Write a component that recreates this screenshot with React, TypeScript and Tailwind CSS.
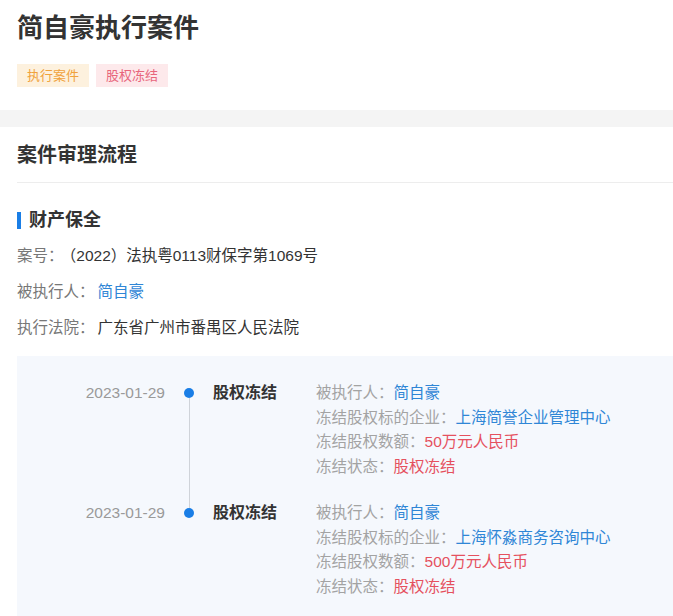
import React from "react";

type Detail = { label: string; value: string; tone: "blue" | "red" };

type Freeze = {
	date: string;
	title: string;
	details: Detail[];
};

const freezes: Freeze[] = [
	{
		date: "2023-01-29",
		title: "股权冻结",
		details: [
			{ label: "被执行人：", value: "简自豪", tone: "blue" },
			{ label: "冻结股权标的企业：", value: "上海简誉企业管理中心", tone: "blue" },
			{ label: "冻结股权数额：", value: "50万元人民币", tone: "red" },
			{ label: "冻结状态：", value: "股权冻结", tone: "red" },
		],
	},
	{
		date: "2023-01-29",
		title: "股权冻结",
		details: [
			{ label: "被执行人：", value: "简自豪", tone: "blue" },
			{ label: "冻结股权标的企业：", value: "上海怀淼商务咨询中心", tone: "blue" },
			{ label: "冻结股权数额：", value: "500万元人民币", tone: "red" },
			{ label: "冻结状态：", value: "股权冻结", tone: "red" },
		],
	},
];

const toneClass = {
	blue: "text-[#2f86d6]",
	red: "text-[#e5515f]",
};

const TimelineItem: React.FC<{ item: Freeze; first: boolean; last: boolean }> = ({
	item,
	first,
	last,
}) => (
	<div className="flex">
		<div className="w-[148px] shrink-0 text-right text-[15.5px] leading-[24.5px] text-[#9a9a9a]">
			{item.date}
		</div>
		{/* dot + connecting line */}
		<div className="w-[48px] shrink-0 flex flex-col items-center">
			<div className={`h-[7.25px] w-px ${first ? "" : "bg-[#cfd3d9]"}`} />
			<div className="h-[10px] w-[10px] rounded-full bg-[#1a7ee6]" />
			<div className={`flex-1 w-px ${last ? "" : "bg-[#cfd3d9]"}`} />
		</div>
		<div className="w-[103px] shrink-0 text-[16px] leading-[24.5px] font-semibold text-[#333]">
			{item.title}
		</div>
		<div className={`flex flex-col text-[15.5px] leading-[24.5px] ${last ? "" : "pb-[22px]"}`}>
			{item.details.map((d, i) => (
				<div key={i} className="whitespace-nowrap">
					<span className="text-[#a3a3a3]">{d.label}</span>
					<span className={toneClass[d.tone]}>{d.value}</span>
				</div>
			))}
		</div>
	</div>
);

export default function App() {
	return (
		<div
			className="w-[673px] min-h-[616px] bg-white text-[#333]"
			style={{ fontFamily: '"Liberation Sans", "Noto Sans CJK SC", sans-serif' }}
		>
			{/* header */}
			<div className="px-[17px] pt-[11px] pb-[23px]">
				<h1 className="text-[26px] leading-[34px] font-bold text-[#333]">简自豪执行案件</h1>
				<div className="mt-[19px] flex gap-[7px]">
					<span className="h-[23px] px-[10px] flex items-center text-[13px] bg-[#fdf1de] text-[#f0a23c]">
						执行案件
					</span>
					<span className="h-[23px] px-[10px] flex items-center text-[13px] bg-[#fde9eb] text-[#e8667c]">
						股权冻结
					</span>
				</div>
			</div>

			<div className="h-[17px] bg-[#f4f4f4]" />

			{/* process */}
			<div className="pt-[14px]">
				<div className="ml-[17px] border-b border-[#ededed] pb-[13px]">
					<h2 className="text-[20px] leading-[28px] font-semibold text-[#333]">案件审理流程</h2>
				</div>

				<div className="px-[17px] pt-[24px]">
					<div className="flex items-center gap-[8px] h-[26px]">
						<div className="w-[4px] h-[17px] bg-[#1a7ee6]" />
						<h3 className="text-[18px] font-semibold text-[#333]">财产保全</h3>
					</div>
					<div className="mt-[5px] text-[15.5px] leading-[36px]">
						<div>
							<span className="text-[#777]">案号：</span>
							<span className="ml-[5px] text-[#333]">（2022）法执粤0113财保字第1069号</span>
						</div>
						<div>
							<span className="text-[#777]">被执行人：</span>
							<span className="ml-[3px] text-[#2f86d6]">简自豪</span>
						</div>
						<div>
							<span className="text-[#777]">执行法院：</span>
							<span className="ml-[3px] text-[#333]">广东省广州市番禺区人民法院</span>
						</div>
					</div>
				</div>

				<div className="mt-[10px] ml-[17px] bg-[#f5f8fd] pt-[25px] pb-[20px] min-h-[258px]">
					{freezes.map((f, i) => (
						<TimelineItem key={i} item={f} first={i === 0} last={i === freezes.length - 1} />
					))}
				</div>
			</div>
		</div>
	);
}
